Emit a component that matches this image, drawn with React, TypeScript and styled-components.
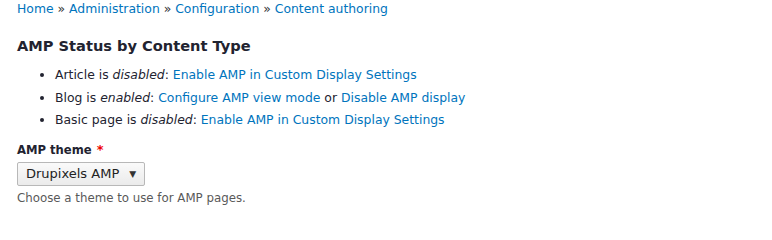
import styled, { createGlobalStyle } from "styled-components";

const GlobalStyle = createGlobalStyle`
  html, body {
    margin: 0;
    padding: 0;
    background: #fff;
  }
  body {
    font-family: "DejaVu Sans", "Liberation Sans", sans-serif;
    font-size: 12.4px;
    color: #222330;
  }
`;

const Page = styled.div`
  width: 772px;
  height: 206px;
  overflow: hidden;
  padding: 0 0 0 17px;
  box-sizing: border-box;
`;

const Breadcrumb = styled.nav`
  font-size: 12.4px;
  line-height: 18px;
  color: #333;
`;

const Link = styled.a`
  color: #0074bd;
  text-decoration: none;
`;

const Heading = styled.h2`
  margin: 18px 0 0;
  font-size: 14.6px;
  line-height: 20px;
  font-weight: bold;
  color: #222330;
`;

const StatusList = styled.ul`
  margin: 8px 0 0;
  padding: 0 0 0 38px;
  list-style: disc;
`;

const StatusItem = styled.li`
  line-height: 22.5px;
`;

const FormItem = styled.div`
  margin-top: 10px;
`;

const Label = styled.label`
  display: block;
  font-weight: bold;
  font-size: 11.6px;
  line-height: 16px;
`;

const Required = styled.span`
  color: #e00;
  margin-left: 5px;
  font-size: 13px;
`;

const SelectBox = styled.div`
  display: inline-flex;
  align-items: center;
  gap: 10px;
  margin-top: 4px;
  height: 24px;
  box-sizing: border-box;
  padding: 0 8px;
  border: 1px solid #b8b8b8;
  border-radius: 2px;
  background: linear-gradient(#fafafa, #ebebeb);
  font-size: 13px;
  color: #222;
`;

const Arrow = styled.span`
  font-size: 9px;
  color: #333;
`;

const Description = styled.div`
  margin-top: 4px;
  color: #595959;
  font-size: 11.8px;
  line-height: 16px;
`;

export default function App() {
  return (
    <>
      <GlobalStyle />
      <Page>
        <Breadcrumb>
          <Link href="#">Home</Link> » <Link href="#">Administration</Link> »{" "}
          <Link href="#">Configuration</Link> »{" "}
          <Link href="#">Content authoring</Link>
        </Breadcrumb>
        <Heading>AMP Status by Content Type</Heading>
        <StatusList>
          <StatusItem>
            Article is <em>disabled</em>:{" "}
            <Link href="#">Enable AMP in Custom Display Settings</Link>
          </StatusItem>
          <StatusItem>
            Blog is <em>enabled</em>:{" "}
            <Link href="#">Configure AMP view mode</Link> or{" "}
            <Link href="#">Disable AMP display</Link>
          </StatusItem>
          <StatusItem>
            Basic page is <em>disabled</em>:{" "}
            <Link href="#">Enable AMP in Custom Display Settings</Link>
          </StatusItem>
        </StatusList>
        <FormItem>
          <Label>
            AMP theme<Required>*</Required>
          </Label>
          <SelectBox>
            Drupixels AMP<Arrow>▼</Arrow>
          </SelectBox>
          <Description>Choose a theme to use for AMP pages.</Description>
        </FormItem>
      </Page>
    </>
  );
}
